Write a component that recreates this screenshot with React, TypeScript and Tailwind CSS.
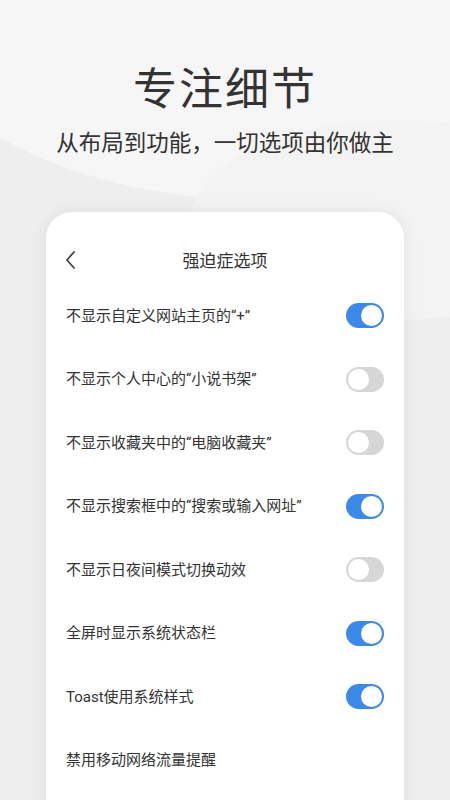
import React from "react";

const options: { label: string; on: boolean | null }[] = [
  { label: "不显示自定义网站主页的“+”", on: true },
  { label: "不显示个人中心的“小说书架”", on: false },
  { label: "不显示收藏夹中的“电脑收藏夹”", on: false },
  { label: "不显示搜索框中的“搜索或输入网址”", on: true },
  { label: "不显示日夜间模式切换动效", on: false },
  { label: "全屏时显示系统状态栏", on: true },
  { label: "Toast使用系统样式", on: true },
  { label: "禁用移动网络流量提醒", on: null },
];

const Toggle: React.FC<{ on: boolean }> = ({ on }) => (
  <div
    className={`flex h-[25px] w-[38px] items-center rounded-full px-[2px] ${
      on ? "justify-end bg-[#3b89e8]" : "justify-start bg-[#d6d6d6]"
    }`}
  >
    <span className="h-[21px] w-[21px] rounded-full bg-white" />
  </div>
);

export default function App() {
  return (
    <div
      className="relative h-[800px] w-[450px] overflow-hidden bg-[#eeeeee] text-[#333333]"
      style={{ fontFamily: 'Roboto, "Noto Sans CJK SC", sans-serif' }}
    >
      {/* soft swoosh behind the heading */}
      <div className="absolute -left-[120px] -top-[260px] h-[460px] w-[760px] rounded-[50%] bg-[#f6f6f6]" />
      <div className="absolute -right-[160px] top-[120px] h-[200px] w-[420px] rounded-[50%] bg-[#f3f3f3]" />

      <div className="relative flex flex-col items-center">
        <h1 className="mt-[60px] text-[44px] leading-[60px] font-normal tracking-[2px] text-[#333333]">
          专注细节
        </h1>
        <p className="mt-[7px] text-[22.5px] leading-[32px] text-[#333333]">
          从布局到功能，一切选项由你做主
        </p>

        <div className="mt-[53px] w-[358px] rounded-t-[26px] bg-white pb-[40px] shadow-[0_0_18px_rgba(0,0,0,0.07)]">
          <div className="relative h-[72px] pt-[37px] text-center">
            <svg
              className="absolute left-[18px] top-[38px]"
              width="14"
              height="20"
              viewBox="0 0 14 20"
              fill="none"
              stroke="#444"
              strokeWidth="1.8"
              strokeLinecap="round"
              strokeLinejoin="round"
            >
              <path d="M10 2 L3 10 L10 18" />
            </svg>
            <span className="block text-[17px] leading-[24px] text-[#333333]">强迫症选项</span>
          </div>
          <div className="flex flex-col">
            {options.map((o) => (
              <div key={o.label} className="flex h-[63.5px] items-center justify-between px-[20px]">
                <span className="text-[15px] text-[#333333]">{o.label}</span>
                {o.on !== null && <Toggle on={o.on} />}
              </div>
            ))}
          </div>
        </div>
      </div>
    </div>
  );
}
